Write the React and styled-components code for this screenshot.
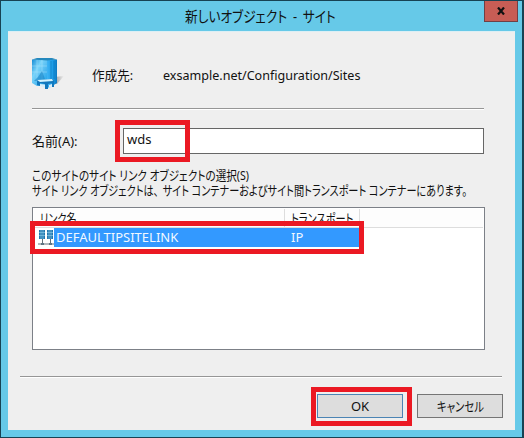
import React from "react";
import styled, { createGlobalStyle } from "styled-components";

const Global = createGlobalStyle`
  * { box-sizing: border-box; }
  body { margin: 0; overflow: hidden; }
`;

const Dialog = styled.main`
  position: relative;
  width: 524px;
  height: 438px;
  display: flex;
  flex-direction: column;
  padding: 0 7px 7px;
  border: 1px solid #174354;
  border-right-width: 2px;
  background: #66c9e8;
  font: 13px/18px "Noto Sans", "Noto Sans CJK JP", sans-serif;
  color: #111;
`;
const TitleBar = styled.header`
  height: 30px;
  flex: none;
  display: flex;
  justify-content: space-between;
  align-items: flex-start;
  padding-left: 177px;
  margin-right: -3px;
`;
const Text = styled.span`
  display: block;
  white-space: nowrap;
  width: max-content;
  line-height: 18px;
  font-size: ${(p) => p.$size || 13}px;
  font-feature-settings: "palt";
  transform-origin: 0 50%;
  transform: scaleX(${(p) => p.$fit || 1});
`;
const Title = styled(Text)`
  margin-top: 6px;
  word-spacing: 3px;
`;
const CloseButton = styled.button`
  width: 34px;
  height: 21px;
  padding: 0;
  display: grid;
  place-items: center;
  background: #c75d55;
  border: 1px solid #703f45;
  border-top: 0;
`;
const Client = styled.section`
  flex: 1;
  background: #efefef;
  border-top: 1px solid #dceff5;
  padding: 26px 12px 0;
`;
const Body = styled.div`
  padding-left: 12px;
  width: 464px;
  margin-bottom: 26px;
`;
const Destination = styled.div`
  height: 50px;
  display: grid;
  grid-template-columns: 60px 71px 1fr;
`;
const DestinationText = styled(Text)`
  margin-top: 8px;
`;
const Rule = styled.div`
  height: 2px;
  border-top: 1px solid #969696;
  border-bottom: 1px solid #fff;
  width: ${(p) => p.$width}px;
`;
const NameRow = styled.label`
  display: grid;
  grid-template-columns: 91px 361px;
  height: 26px;
  margin-top: 18px;
  align-items: center;
`;
const NameInput = styled.div`
  height: 26px;
  border: 1px solid #666;
  background: #fff;
  padding: 1px 0 0 3px;
`;
const Description = styled.div`
  height: 53px;
  padding-top: 14px;
  ${Text} { line-height: 15px; }
`;
const Clause = styled.span`
  margin-right: 5px;
`;
const List = styled.div`
  width: 453px;
  height: 143px;
  background: #fff;
  border: 1px solid #7c8087;
  padding: 1px;
`;
const ListHeader = styled.div`
  height: 19px;
  display: grid;
  grid-template-columns: 251px 75px 1fr;
  border-bottom: 1px solid #ddd;
  background: #fdfdfd;
`;
const HeaderCell = styled.div`
  border-right: 1px solid #ddd;
  padding-left: 6px;
  &:last-child { border-right: 0; }
`;
const ListRow = styled.div`
  display: grid;
  grid-template-columns: 20px 305px;
  height: 19px;
`;
const RowIcon = styled.div`
  padding: 1px 0 0 4px;
  height: 19px;
`;
const Selection = styled.div`
  display: grid;
  grid-template-columns: 235px 1fr;
  background: #3399ff;
  color: #f1f8ff;
  padding-left: 2px;
`;
const Actions = styled.div`
  display: flex;
  justify-content: flex-end;
  gap: 14px;
  margin-top: 16px;
`;
const Button = styled.button`
  width: 86px;
  height: 24px;
  padding: 0;
  border: 1px solid ${(p) => (p.$primary ? "#4c84b4" : "#757575")};
  background: #ddd;
  color: #111;
  font: inherit;
  display: grid;
  place-items: center;
  ${Text} { transform-origin: center; }
`;
const Highlight = styled.div`
  position: absolute;
  left: ${(p) => p.$x}px;
  top: ${(p) => p.$y}px;
  width: ${(p) => p.$w}px;
  height: ${(p) => p.$h}px;
  border: 5px solid #eb1923;
  pointer-events: none;
`;

function BuildingIcon() {
  return (
    <svg width="36" height="34" viewBox="0 0 36 34">
      <defs>
        <linearGradient id="glass" x1="0" y1="0" x2="1" y2="1">
          <stop offset="0" stopColor="#168bd4" />
          <stop offset=".35" stopColor="#7ad4fa" />
          <stop offset=".65" stopColor="#4db8f0" />
          <stop offset="1" stopColor="#169fe8" />
        </linearGradient>
        <linearGradient id="side" x1="0" y1="0" x2="1" y2="0">
          <stop offset="0" stopColor="#3fb4f4" />
          <stop offset=".6" stopColor="#1b9be6" />
          <stop offset="1" stopColor="#0c78c0" />
        </linearGradient>
        <linearGradient id="shade" x1="0" y1="0" x2="1" y2="0">
          <stop offset="0" stopColor="#888" />
          <stop offset="1" stopColor="#efefef" />
        </linearGradient>
      </defs>
      <path d="M22 19l10-1-7 8h-5z" fill="url(#shade)" />
      <path d="M0 1.5L15 1v26L5 28l-5-3z" fill="url(#glass)" />
      <path d="M15 2l10-.5V25l-8 5-2-2z" fill="url(#side)" />
      <path d="M0 1.5L5 0h15l5 1.5-10 1z" fill="#2488bd" />
      <path d="M0 8h15M0 14h15M5 2v21M10 2v21" stroke="#b3e7ff" strokeWidth=".6" opacity=".7" />
      <path d="M19 3v19M22 3v18" stroke="#087bc2" strokeWidth=".7" />
      <path d="M2 23l4-4 4-6 3 8 3 2z" fill="#1785c8" opacity=".6" />
      <path d="M5 22l15-1 2 2v6h-2v-4l-4 1v5h-3v-5l-5-1v3l-3-1z" fill="#1278bd" />
      <path d="M5 22l15-1 1 2-13 1z" fill="#d1f3ff" />
      <path d="M8 26l5 .5v3.5l-5-2zM17 27l3-1v3l-3 1z" fill="#d8effa" />
    </svg>
  );
}

function LinkIcon() {
  return (
    <svg width="16" height="17" viewBox="0 0 16 17">
      <path d="M1 1h6v9H1zM9 1h6v9H9z" fill="#2176ae" />
      <path d="M1 3.5h6M1 6.5h6M9 3.5h6M9 6.5h6M3 1v9M5 1v9M11 1v9M13 1v9" stroke="#82c6e4" strokeWidth=".7" />
      <path d="M4.5 10v4M12.5 10v4M0 15h16" stroke="#64717a" />
      <path d="M3 14h3v2H3zM11 14h3v2h-3z" fill="#5e7583" />
    </svg>
  );
}

export default function App() {
  return (
    <Dialog>
      <Global />
      <TitleBar>
        <Title $size={15} $fit={0.845}>新しいオブジェクト - サイト</Title>
        <CloseButton aria-label="閉じる">
          <svg width="10" height="8" viewBox="0 0 10 8">
            <path d="M2 .5l6 7M8 .5l-6 7" stroke="#111" strokeWidth="2.2" />
          </svg>
        </CloseButton>
      </TitleBar>
      <Client>
        <Body>
          <Destination>
            <BuildingIcon />
            <DestinationText $fit={0.97}>作成先:</DestinationText>
            <DestinationText $fit={0.965}>exsample.net/Configuration/Sites</DestinationText>
          </Destination>
          <Rule $width={452} />
          <NameRow>
            <Text>名前(A):</Text>
            <NameInput><Text>wds</Text></NameInput>
          </NameRow>
          <Description>
            <Text $fit={0.815}>このサイトのサイト リンク オブジェクトの選択(S)</Text>
            <Text $fit={0.781}><Clause>サイト リンク オブジェクトは、</Clause>サイト コンテナーおよびサイト間トランスポート コンテナーにあります。</Text>
          </Description>
          <List>
            <ListHeader>
              <HeaderCell><Text $fit={0.785}>リンク名</Text></HeaderCell>
              <HeaderCell><Text $fit={0.785}>トランスポート</Text></HeaderCell>
              <HeaderCell />
            </ListHeader>
            <ListRow>
              <RowIcon><LinkIcon /></RowIcon>
              <Selection>
                <Text>DEFAULTIPSITELINK</Text>
                <Text>IP</Text>
              </Selection>
            </ListRow>
          </List>
        </Body>
        <Rule $width={482} />
        <Actions>
          <Button $primary><Text>OK</Text></Button>
          <Button><Text $fit={0.8}>キャンセル</Text></Button>
        </Actions>
      </Client>
      <Highlight $x={114} $y={119} $w={75} $h={42} />
      <Highlight $x={29} $y={220} $w={334} $h={33} />
      <Highlight $x={310} $y={386} $w={101} $h={39} />
    </Dialog>
  );
}
